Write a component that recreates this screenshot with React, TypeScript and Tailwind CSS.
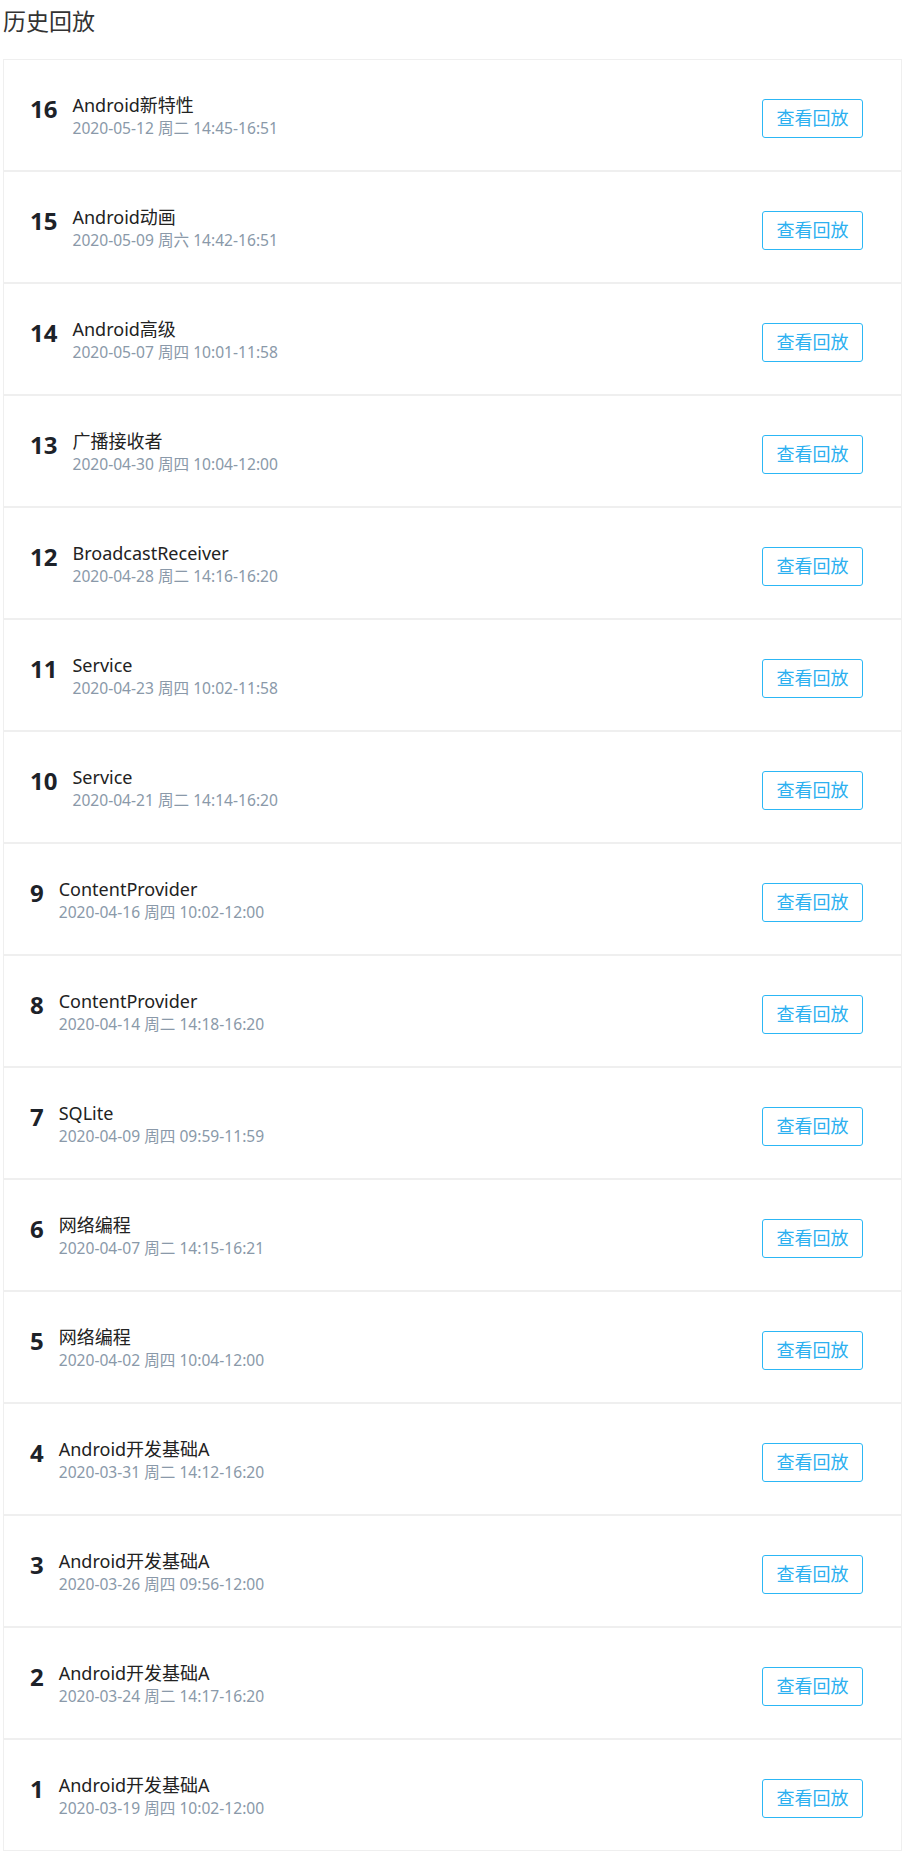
const SESSIONS = [
  { no: 16, title: "Android新特性", time: "2020-05-12 周二 14:45-16:51" },
  { no: 15, title: "Android动画", time: "2020-05-09 周六 14:42-16:51" },
  { no: 14, title: "Android高级", time: "2020-05-07 周四 10:01-11:58" },
  { no: 13, title: "广播接收者", time: "2020-04-30 周四 10:04-12:00" },
  { no: 12, title: "BroadcastReceiver", time: "2020-04-28 周二 14:16-16:20" },
  { no: 11, title: "Service", time: "2020-04-23 周四 10:02-11:58" },
  { no: 10, title: "Service", time: "2020-04-21 周二 14:14-16:20" },
  { no: 9, title: "ContentProvider", time: "2020-04-16 周四 10:02-12:00" },
  { no: 8, title: "ContentProvider", time: "2020-04-14 周二 14:18-16:20" },
  { no: 7, title: "SQLite", time: "2020-04-09 周四 09:59-11:59" },
  { no: 6, title: "网络编程", time: "2020-04-07 周二 14:15-16:21" },
  { no: 5, title: "网络编程", time: "2020-04-02 周四 10:04-12:00" },
  { no: 4, title: "Android开发基础A", time: "2020-03-31 周二 14:12-16:20" },
  { no: 3, title: "Android开发基础A", time: "2020-03-26 周四 09:56-12:00" },
  { no: 2, title: "Android开发基础A", time: "2020-03-24 周二 14:17-16:20" },
  { no: 1, title: "Android开发基础A", time: "2020-03-19 周四 10:02-12:00" },
];

export default function App() {
  return (
    <div className="min-h-screen bg-white font-['Noto_Sans','Noto_Sans_CJK_SC',sans-serif] text-[#222]">
      <h1 className="pl-[3px] pt-[6px] text-[23px] font-normal leading-[30px] text-[#333]">历史回放</h1>

      <ul className="ml-[3px] mt-[23px] w-[899px]">
        {SESSIONS.map((item) => (
          <li
            key={item.no}
            className="flex h-[112px] items-center justify-between border border-[#efefef] pl-[26px] pr-[38px]"
          >
            <div className="flex items-start">
              <span className="mr-[15px] text-[24px] font-bold leading-[32px] text-[#1d2229]">{item.no}</span>
              <div className="flex flex-col">
                <span className="text-[18px] leading-[25px] text-[#222]">{item.title}</span>
                <span className="text-[15.6px] leading-[20px] text-[#8a99a9]">{item.time}</span>
              </div>
            </div>
            <button
              type="button"
              className="mt-[6px] h-[39px] w-[101px] rounded-[3px] border border-[#2cb7f5] text-[18px] leading-[37px] text-[#2cb0f0]"
            >
              查看回放
            </button>
          </li>
        ))}
      </ul>
    </div>
  );
}
